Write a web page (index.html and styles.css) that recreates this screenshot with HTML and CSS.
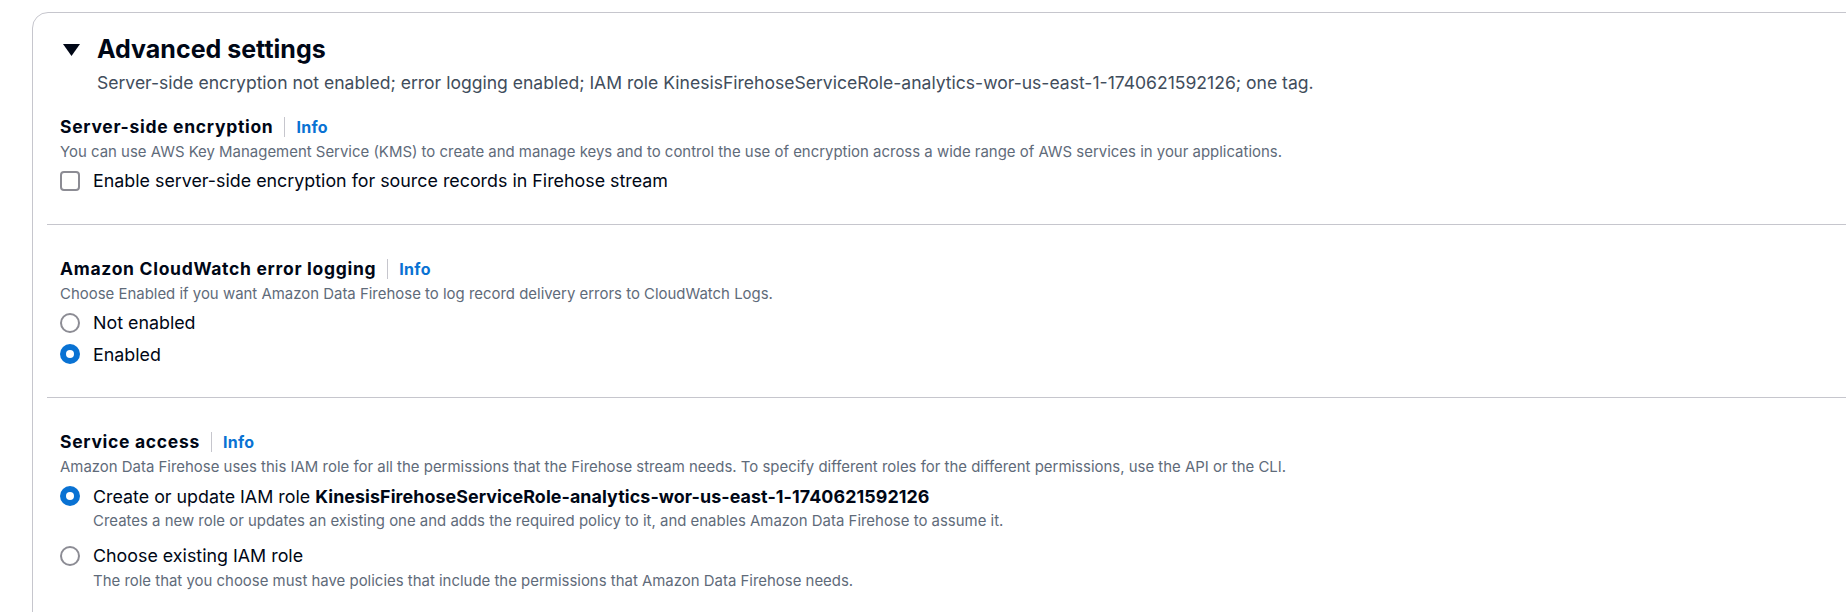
FILE: index.html
```
<!DOCTYPE html>
<html lang="en">
<head>
<meta charset="utf-8">
<title>Advanced settings</title>
<link rel="stylesheet" href="styles.css">
</head>
<body>
<div class="card">
  <div class="header">
    <div class="title-row">
      <svg class="caret" width="17" height="12" viewBox="0 0 17 12" aria-hidden="true"><polygon points="0,0 17,0 8.5,12" fill="#000716"/></svg>
      <h2 class="title">Advanced settings</h2>
    </div>
    <p class="summary">Server-side encryption not enabled; error logging enabled; IAM role KinesisFirehoseServiceRole-analytics-wor-us-east-1-1740621592126; one tag.</p>
  </div>

  <section class="field first">
    <div class="label-row"><span class="label">Server-side encryption</span><span class="sep"></span><a class="info" href="#">Info</a></div>
    <p class="desc">You can use AWS Key Management Service (KMS) to create and manage keys and to control the use of encryption across a wide range of AWS services in your applications.</p>
    <div class="options">
      <div class="option"><span class="checkbox"></span><span class="opt-text">Enable server-side encryption for source records in Firehose stream</span></div>
    </div>
  </section>

  <section class="field">
    <div class="label-row"><span class="label">Amazon CloudWatch error logging</span><span class="sep"></span><a class="info" href="#">Info</a></div>
    <p class="desc">Choose Enabled if you want Amazon Data Firehose to log record delivery errors to CloudWatch Logs.</p>
    <div class="options">
      <div class="option"><span class="radio"></span><span class="opt-text">Not enabled</span></div>
      <div class="option"><span class="radio checked"></span><span class="opt-text">Enabled</span></div>
    </div>
  </section>

  <section class="field">
    <div class="label-row"><span class="label">Service access</span><span class="sep"></span><a class="info" href="#">Info</a></div>
    <p class="desc">Amazon Data Firehose uses this IAM role for all the permissions that the Firehose stream needs. To specify different roles for the different permissions, use the API or the CLI.</p>
    <div class="options">
      <div class="option with-desc">
        <span class="radio checked"></span>
        <div class="opt-body">
          <span class="opt-text">Create or update IAM role <strong>KinesisFirehoseServiceRole-analytics-wor-us-east-1-1740621592126</strong></span>
          <p class="opt-desc">Creates a new role or updates an existing one and adds the required policy to it, and enables Amazon Data Firehose to assume it.</p>
        </div>
      </div>
      <div class="option with-desc">
        <span class="radio"></span>
        <div class="opt-body">
          <span class="opt-text">Choose existing IAM role</span>
          <p class="opt-desc">The role that you choose must have policies that include the permissions that Amazon Data Firehose needs.</p>
        </div>
      </div>
    </div>
  </section>
</div>
</body>
</html>
```
FILE: styles.css
```
html, body {
  margin: 0;
  padding: 0;
  background: #ffffff;
  overflow: hidden;
}
body {
  font-family: "Inter", "Liberation Sans", sans-serif;
  color: #000716;
  height: 612px;
}
p { margin: 0; }

.card {
  margin: 12px -30px 0 32px;
  border: 1px solid #c6c6cd;
  border-radius: 16px;
  padding: 0 0 40px 14px;
  min-height: 700px;
}

.header {
  padding: 20px 0 0 16px;
}
.title-row {
  display: flex;
  align-items: center;
  gap: 17px;
  height: 32px;
}
.caret { flex: none; display: block; margin-top: 1px; }
.title {
  margin: 0;
  font-size: 25px;
  line-height: 32px;
  font-weight: 700;
  color: #000716;
}
.summary {
  margin-top: 4px;
  padding-left: 34px;
  font-size: 17.56px;
  line-height: 27.5px;
  color: #414d5c;
}

.field {
  padding: 31px 0 29px 13px;
  border-top: 1px solid #c6c6cd;
}
.field.first {
  border-top: none;
  padding-top: 17px;
}

.label-row {
  display: flex;
  align-items: baseline;
  height: 26px;
}
.label {
  font-size: 17.5px;
  line-height: 26px;
  font-weight: 700;
  letter-spacing: 0.7px;
  color: #000716;
}
.sep {
  align-self: center;
  width: 1px;
  height: 20px;
  background: #c6c6cd;
  margin: 0 11px;
}
.info {
  font-size: 16px;
  line-height: 26px;
  font-weight: 700;
  letter-spacing: 0.3px;
  color: #0972d3;
  text-decoration: none;
}
.desc {
  margin-top: 2px;
  font-size: 14.95px;
  line-height: 20px;
  color: #5f6b7a;
}

.options {
  margin-top: 5.5px;
  display: flex;
  flex-direction: column;
  gap: 4px;
}
.option {
  display: flex;
  align-items: flex-start;
  gap: 13px;
}
.option.with-desc { padding-bottom: 7px; }
.option:last-child { padding-bottom: 0; }

.opt-text {
  font-size: 17.85px;
  line-height: 27.5px;
  color: #000716;
}
.opt-text strong {
  font-weight: 700;
  letter-spacing: 0.08px;
}
.opt-body {
  display: flex;
  flex-direction: column;
}
.opt-desc {
  margin-top: 1px;
  font-size: 14.95px;
  line-height: 20px;
  color: #5f6b7a;
}

.checkbox, .radio {
  flex: none;
  box-sizing: border-box;
  width: 20px;
  height: 20px;
  margin-top: 3.75px;
  border: 2px solid #8c8c94;
  background: #ffffff;
}
.checkbox { border-radius: 4px; }
.radio { border-radius: 50%; position: relative; }
.radio.checked {
  border: none;
  background: #0972d3;
}
.radio.checked::after {
  content: "";
  position: absolute;
  left: 6px;
  top: 6px;
  width: 8px;
  height: 8px;
  border-radius: 50%;
  background: #ffffff;
}
```
